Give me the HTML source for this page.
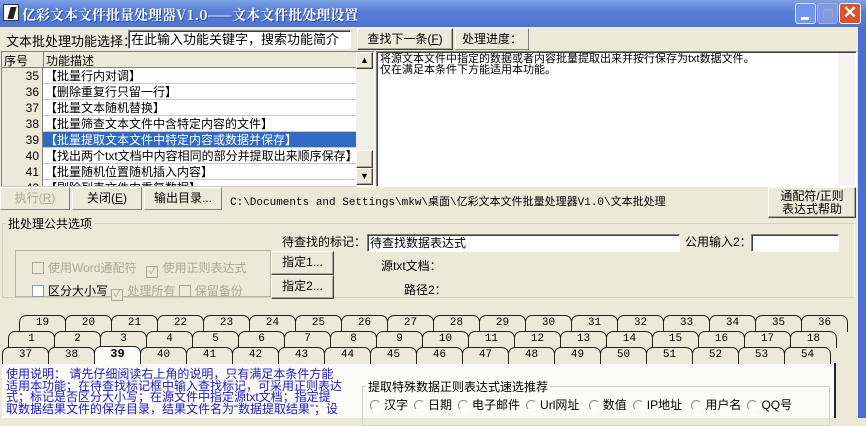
<!DOCTYPE html>
<html><head><meta charset="utf-8"><style>
*{margin:0;padding:0;box-sizing:border-box}
body{width:866px;height:418px;overflow:hidden;background:#ece9d8;font-family:"Liberation Sans","Noto Sans CJK SC","WenQuanYi Zen Hei",sans-serif;font-size:12px;color:#000;position:relative}
.a{position:absolute;white-space:nowrap}
.btn{position:absolute;background:#ece9d8;border:1px solid;border-color:#fff #404040 #404040 #fff;box-shadow:inset -1px -1px 0 #aca899;text-align:center;line-height:20px}
.sunk{position:absolute;background:#fff;border:1px solid;border-color:#808080 #fff #fff #808080;box-shadow:inset 1px 1px 0 #404040}
.tab{position:absolute;height:17px;width:47px;border:1px solid #222;border-bottom:none;border-radius:7px 7px 0 0;background:#ece9d8;text-align:center;line-height:15px;font-size:11px;font-family:"Liberation Mono",monospace}
.row{position:absolute;left:2px;width:354px;height:16px;border-bottom:1px solid #c8c8c8;background:#fff}
.row .n{position:absolute;left:0;width:41px;height:16px;background:#ece9d8;border-right:1px solid #808080;text-align:right;padding-right:3px;line-height:16px}
.row .t{position:absolute;left:43px;line-height:16px}
.chk{display:inline-block;width:12px;height:12px;border:1px solid #aca899;background:#ece9d8;vertical-align:-2px;margin-right:4px;font-size:10px;line-height:10px;color:#aca899;text-align:center}
.rad{display:inline-block;width:11px;height:11px;border-radius:50%;border:1px solid #aaa;border-color:#888 #fff #fff #888;background:#fff;vertical-align:-2px;margin:0 3px 0 6px}
</style></head><body>
<div class="a" style="left:0;top:0;width:866px;height:27px;background:linear-gradient(#7da2e4,#5a7fd8 40%,#4f74d0);"></div>
<div class="a" style="left:3px;top:4px;width:16px;height:17px;background:#fff;border:1px solid #333"><div style="position:absolute;left:5px;top:2px;width:6px;height:12px;background:#222;transform:skewX(-15deg)"></div></div>
<div class="a" style="left:22px;top:5px;color:#fff;font-size:14px;font-weight:bold;font-family:'Noto Serif CJK SC',serif;text-shadow:1px 1px #2a4aa0">亿彩文本文件批量处理器V1.0——文本文件批处理设置</div>
<div class="a" style="left:795px;top:3px;width:21px;height:21px;background:#6f97ee;border:1px solid #dde;border-radius:3px"><div style="position:absolute;left:5px;top:13px;width:8px;height:3px;background:#fff"></div></div>
<div class="a" style="left:817px;top:3px;width:21px;height:21px;background:#7b9ae6;border:1px solid #aac;border-radius:3px"><div style="position:absolute;left:5px;top:5px;width:10px;height:9px;border:1px solid #9ab;border-top-width:2px"></div></div>
<div class="a" style="left:839px;top:3px;width:22px;height:21px;background:#d9542d;border:1px solid #fff;border-radius:3px;color:#fff;font-size:17px;line-height:18px;text-align:center;font-weight:bold">✕</div>
<div class="a" style="left:858px;top:27px;width:8px;height:391px;background:#4a6fd0"></div>
<div class="a" style="left:6px;top:31px;font-size:13px">文本批处理功能选择：</div>
<div class="sunk" style="left:128px;top:30px;width:223px;height:19px;padding:1px 2px;font-size:13px;line-height:15px">在此输入功能关键字，搜索功能简介</div>
<div class="btn" style="left:357px;top:28px;width:96px;height:22px">查找下一条(<u>F</u>)</div>
<div class="a" style="left:455px;top:28px;width:74px;height:22px;border:1px solid;border-color:#fff #808080 #808080 #fff;line-height:20px;padding-left:6px">处理进度：</div>
<div class="sunk" style="left:1px;top:51px;width:374px;height:136px;background:#fff"></div>
<div class="a" style="left:2px;top:52px;width:354px;height:16px;background:#ece9d8;border-bottom:1px solid #808080"><span class="a" style="left:2px;top:0">序号</span><span class="a" style="left:41px;top:0;height:16px;border-left:1px solid #808080;padding-left:2px">功能描述</span></div>
<div class="row" style="top:68px"><div class="n">35</div><div class="t">【批量行内对调】</div></div>
<div class="row" style="top:84px"><div class="n">36</div><div class="t">【删除重复行只留一行】</div></div>
<div class="row" style="top:100px"><div class="n">37</div><div class="t">【批量文本随机替换】</div></div>
<div class="row" style="top:116px"><div class="n">38</div><div class="t">【批量筛查文本文件中含特定内容的文件】</div></div>
<div class="row" style="top:132px;background:#316ac5;color:#fff"><div class="n" style="color:#000">39</div><div class="t">【批量提取文本文件中特定内容或数据并保存】</div></div>
<div class="row" style="top:148px"><div class="n">40</div><div class="t">【找出两个txt文档中内容相同的部分并提取出来顺序保存】</div></div>
<div class="row" style="top:164px"><div class="n">41</div><div class="t">【批量随机位置随机插入内容】</div></div>
<div class="row" style="top:180px;height:7px;overflow:hidden"><div class="n">42</div><div class="t">【剔除列表文件中重复数据】</div></div>
<div class="a" style="left:356px;top:52px;width:18px;height:134px;background:#f0efe8"></div>
<div class="btn" style="left:356px;top:52px;width:17px;height:17px;line-height:14px;font-size:9px">▲</div>
<div class="btn" style="left:356px;top:150px;width:17px;height:18px"></div>
<div class="btn" style="left:356px;top:168px;width:17px;height:17px;line-height:14px;font-size:9px">▼</div>
<div class="sunk" style="left:376px;top:51px;width:481px;height:136px;padding:2px 3px;line-height:11px;font-size:11px">将源文本文件中指定的数据或者内容批量提取出来并按行保存为txt数据文件。<br>仅在满足本条件下方能适用本功能。</div>
<div class="a" style="left:838px;top:53px;width:17px;height:132px;background:#f4f3ee"></div>
<div class="a" style="left:0;top:187px;width:70px;height:23px;border:1px solid;border-color:#fff #808080 #808080 #fff;text-align:center;line-height:21px;color:#aca899">执行(<u>R</u>)</div>
<div class="a" style="left:72px;top:187px;width:70px;height:23px;border:1px solid;border-color:#fff #808080 #808080 #fff;text-align:center;line-height:21px">关闭(<u>E</u>)</div>
<div class="a" style="left:144px;top:187px;width:78px;height:23px;border:1px solid;border-color:#fff #808080 #808080 #fff;text-align:center;line-height:21px">输出目录...</div>
<div class="a" style="left:230px;top:193px;font-size:11px;font-family:'Liberation Mono','Noto Sans CJK SC',monospace">C:\Documents and Settings\mkw\桌面\亿彩文本文件批量处理器V1.0\文本批处理</div>
<div class="btn" style="left:768px;top:187px;width:88px;height:31px;line-height:13px;padding-top:2px">通配符/正则<br>表达式帮助</div>
<div class="a" style="left:2px;top:223px;width:853px;height:75px;border:1px solid #d0d0bf;border-right-color:#fff"></div>
<div class="a" style="left:6px;top:215px;background:#ece9d8;padding:0 2px">批处理公共选项</div>
<div class="a" style="left:282px;top:233px">待查找的标记：</div>
<div class="sunk" style="left:367px;top:234px;width:313px;height:18px;padding:1px 2px;line-height:14px">待查找数据表达式</div>
<div class="a" style="left:685px;top:233px">公用输入2：</div>
<div class="sunk" style="left:751px;top:234px;width:88px;height:18px"></div>
<div class="a" style="left:15px;top:250px;width:256px;height:47px;border:1px solid #b8b4a0"></div>
<div class="a" style="left:32px;top:259px;color:#aca899"><span class="chk"></span>使用Word通配符 &nbsp; <span class="chk">✓</span>使用正则表达式</div>
<div class="a" style="left:32px;top:282px"><span class="chk" style="background:#fff;border-color:#7f9db9"></span>区分大小写 <span style="color:#aca899"><span class="chk">✓</span>处理所有 <span class="chk"></span>保留备份</span></div>
<div class="btn" style="left:271px;top:251px;width:63px;height:24px">指定1...</div>
<div class="btn" style="left:271px;top:275px;width:63px;height:24px">指定2...</div>
<div class="a" style="left:381px;top:257px">源txt文档：</div>
<div class="a" style="left:404px;top:281px">路径2：</div>
<div class="a" style="left:2px;top:363px;width:834px;height:55px;background:#fbfbf8;border-left:1px solid #fff;border-right:2px solid #222"></div>
<div id="tabs"></div>
<div class="a" style="left:6px;top:369px;color:#1a1acc;line-height:11.5px;font-size:12px">使用说明： 请先仔细阅读右上角的说明，只有满足本条件方能<br>适用本功能；在待查找标记框中输入查找标记，可采用正则表达<br>式；标记是否区分大小写；在源文件中指定源txt文档；指定提<br>取数据结果文件的保存目录，结果文件名为“数据提取结果”；设</div>
<div class="a" style="left:362px;top:386px;width:468px;height:40px;border:1px solid #d0d0bf"></div>
<div class="a" style="left:366px;top:378px;background:#fbfbf8;padding:0 2px">提取特殊数据正则表达式速选推荐</div>
<div class="a" style="left:364px;top:396px"><span class="rad"></span>汉字<span class="rad"></span>日期<span class="rad"></span>电子邮件<span class="rad"></span>Url网址 <span class="rad"></span>数值<span class="rad"></span>IP地址 <span class="rad"></span>用户名<span class="rad"></span>QQ号</div>
<script>
var h='';
function row(x0,y,n0,sel){for(var i=0;i<18;i++){var x=x0+i*46;var st='left:'+x+'px;top:'+y+'px;';if(sel===i){st+='background:#fbfbf8;font-weight:bold;font-size:12px;top:'+(y-1)+'px;height:18px;z-index:2';}h+='<div class="tab" style="'+st+'">'+(n0+i)+'</div>';}}
row(19,315,19);row(8,331,1);row(2,347,37,2);
document.getElementById('tabs').innerHTML=h;
</script>
</body></html>
